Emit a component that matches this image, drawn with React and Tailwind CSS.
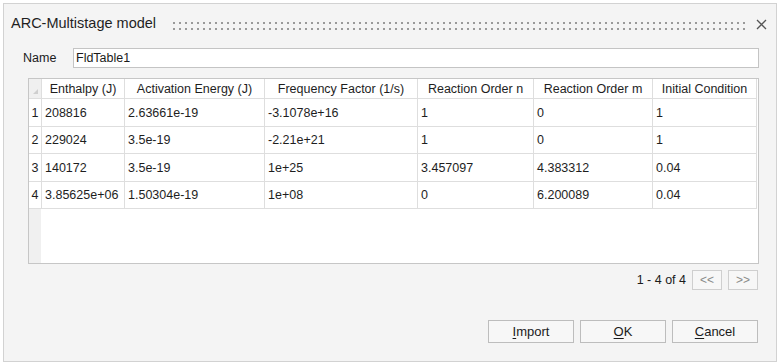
import React from 'react';

const COLUMNS = [
    { label: 'Enthalpy (J)', w: 'w-[83px]' },
    { label: 'Activation Energy (J)', w: 'w-[140px]' },
    { label: 'Frequency Factor (1/s)', w: 'w-[153px]' },
    { label: 'Reaction Order n', w: 'w-[116px]' },
    { label: 'Reaction Order m', w: 'w-[119px]' },
    { label: 'Initial Condition', w: 'flex-1' },
];

const ROWS = [
    ['208816', '2.63661e-19', '-3.1078e+16', '1', '0', '1'],
    ['229024', '3.5e-19', '-2.21e+21', '1', '0', '1'],
    ['140172', '3.5e-19', '1e+25', '3.457097', '4.383312', '0.04'],
    ['3.85625e+06', '1.50304e-19', '1e+08', '0', '6.200089', '0.04'],
];

const BTN = "h-[23px] w-[86px] border border-[#bdbdbd] bg-[#f7f7f7] text-[13px] text-[#1b1b1b] flex items-center justify-center";

const App = () => {
    return (
        <div className="w-[778px] h-[362px] bg-white pt-[3px] pl-[3px] font-['Liberation_Sans',Arial,sans-serif]">
            <div className="w-[774px] h-[359px] border border-[#d2d2d2] bg-[#f4f4f4] flex flex-col">
                {/* title bar */}
                <div className="h-[40px] flex items-center pl-[7px] pr-[9px]">
                    <span className="text-[14.5px] text-[#1f1f1f]">ARC-Multistage model</span>
                    <div className="flex-1 ml-[15px] mr-[9px] mt-[3px] h-[12px] bg-[radial-gradient(circle,#9a9a9a_0.9px,transparent_1.3px)] bg-[length:6px_6px]" />
                    <svg width="11" height="11" viewBox="0 0 11 11" className="mt-[1px]">
                        <path d="M1 1 L10 10 M10 1 L1 10" stroke="#555" strokeWidth="1.3" />
                    </svg>
                </div>

                {/* name row */}
                <div className="mt-[4px] h-[20px] flex items-center pl-[19px]">
                    <span className="w-[50px] text-[12.5px] text-[#1b1b1b]">Name</span>
                    <div className="w-[686px] h-[20px] border border-[#c4c4c4] bg-white flex items-center pl-[2px] text-[12.5px] text-[#1b1b1b]">
                        FldTable1
                    </div>
                </div>

                {/* table */}
                <div className="mt-[10px] ml-[24px] w-[731px] h-[186px] border border-[#c6c6c6] bg-white flex flex-col text-[12.5px] text-[#1e1e1e] pr-[1px]">
                    <div className="h-[20px] flex border-b border-[#dedede] shrink-0">
                        <div className="w-[13px] bg-[#f0f0f0] border-r border-[#dedede] relative">
                            <svg width="5" height="5" viewBox="0 0 5 5" className="absolute right-[3px] bottom-[4px]">
                                <path d="M5 0 L5 5 L0 5 Z" fill="#cfcfcf" />
                            </svg>
                        </div>
                        {COLUMNS.map((c) => (
                            <div key={c.label} className={`${c.w} border-r border-[#dedede] flex items-center justify-center whitespace-nowrap pt-[1px]`}>
                                {c.label}
                            </div>
                        ))}
                    </div>
                    {ROWS.map((row, i) => (
                        <div key={i} className="h-[27.5px] flex border-b border-[#dedede] shrink-0">
                            <div className="w-[13px] border-r border-[#dedede] flex items-center justify-center pt-[2px]">{i + 1}</div>
                            {row.map((v, j) => (
                                <div key={j} className={`${COLUMNS[j].w} border-r border-[#dedede] flex items-center pl-[3px] pt-[2px] whitespace-nowrap`}>
                                    {v}
                                </div>
                            ))}
                        </div>
                    ))}
                    <div className="flex-1 flex">
                        <div className="w-[12px] bg-[#f0f0f0]" />
                    </div>
                </div>

                {/* pagination */}
                <div className="mt-[6px] h-[20px] flex items-center justify-end pr-[18px] gap-[6px]">
                    <span className="text-[12.5px] text-[#1b1b1b]">1 - 4 of 4</span>
                    <div className="w-[30px] h-[20px] border border-[#cfcfcf] bg-[#f7f7f7] flex items-center justify-center text-[12px] text-[#8a8a8a]">&lt;&lt;</div>
                    <div className="w-[30px] h-[20px] border border-[#cfcfcf] bg-[#f7f7f7] flex items-center justify-center text-[12px] text-[#8a8a8a]">&gt;&gt;</div>
                </div>

                {/* buttons */}
                <div className="mt-[30px] flex justify-end gap-[6px] pr-[18px]">
                    <button className={BTN}><span className="underline underline-offset-2">I</span>mport</button>
                    <button className={BTN}><span className="underline underline-offset-2">O</span>K</button>
                    <button className={BTN}><span className="underline underline-offset-2">C</span>ancel</button>
                </div>
            </div>
        </div>
    );
};

export default App;
